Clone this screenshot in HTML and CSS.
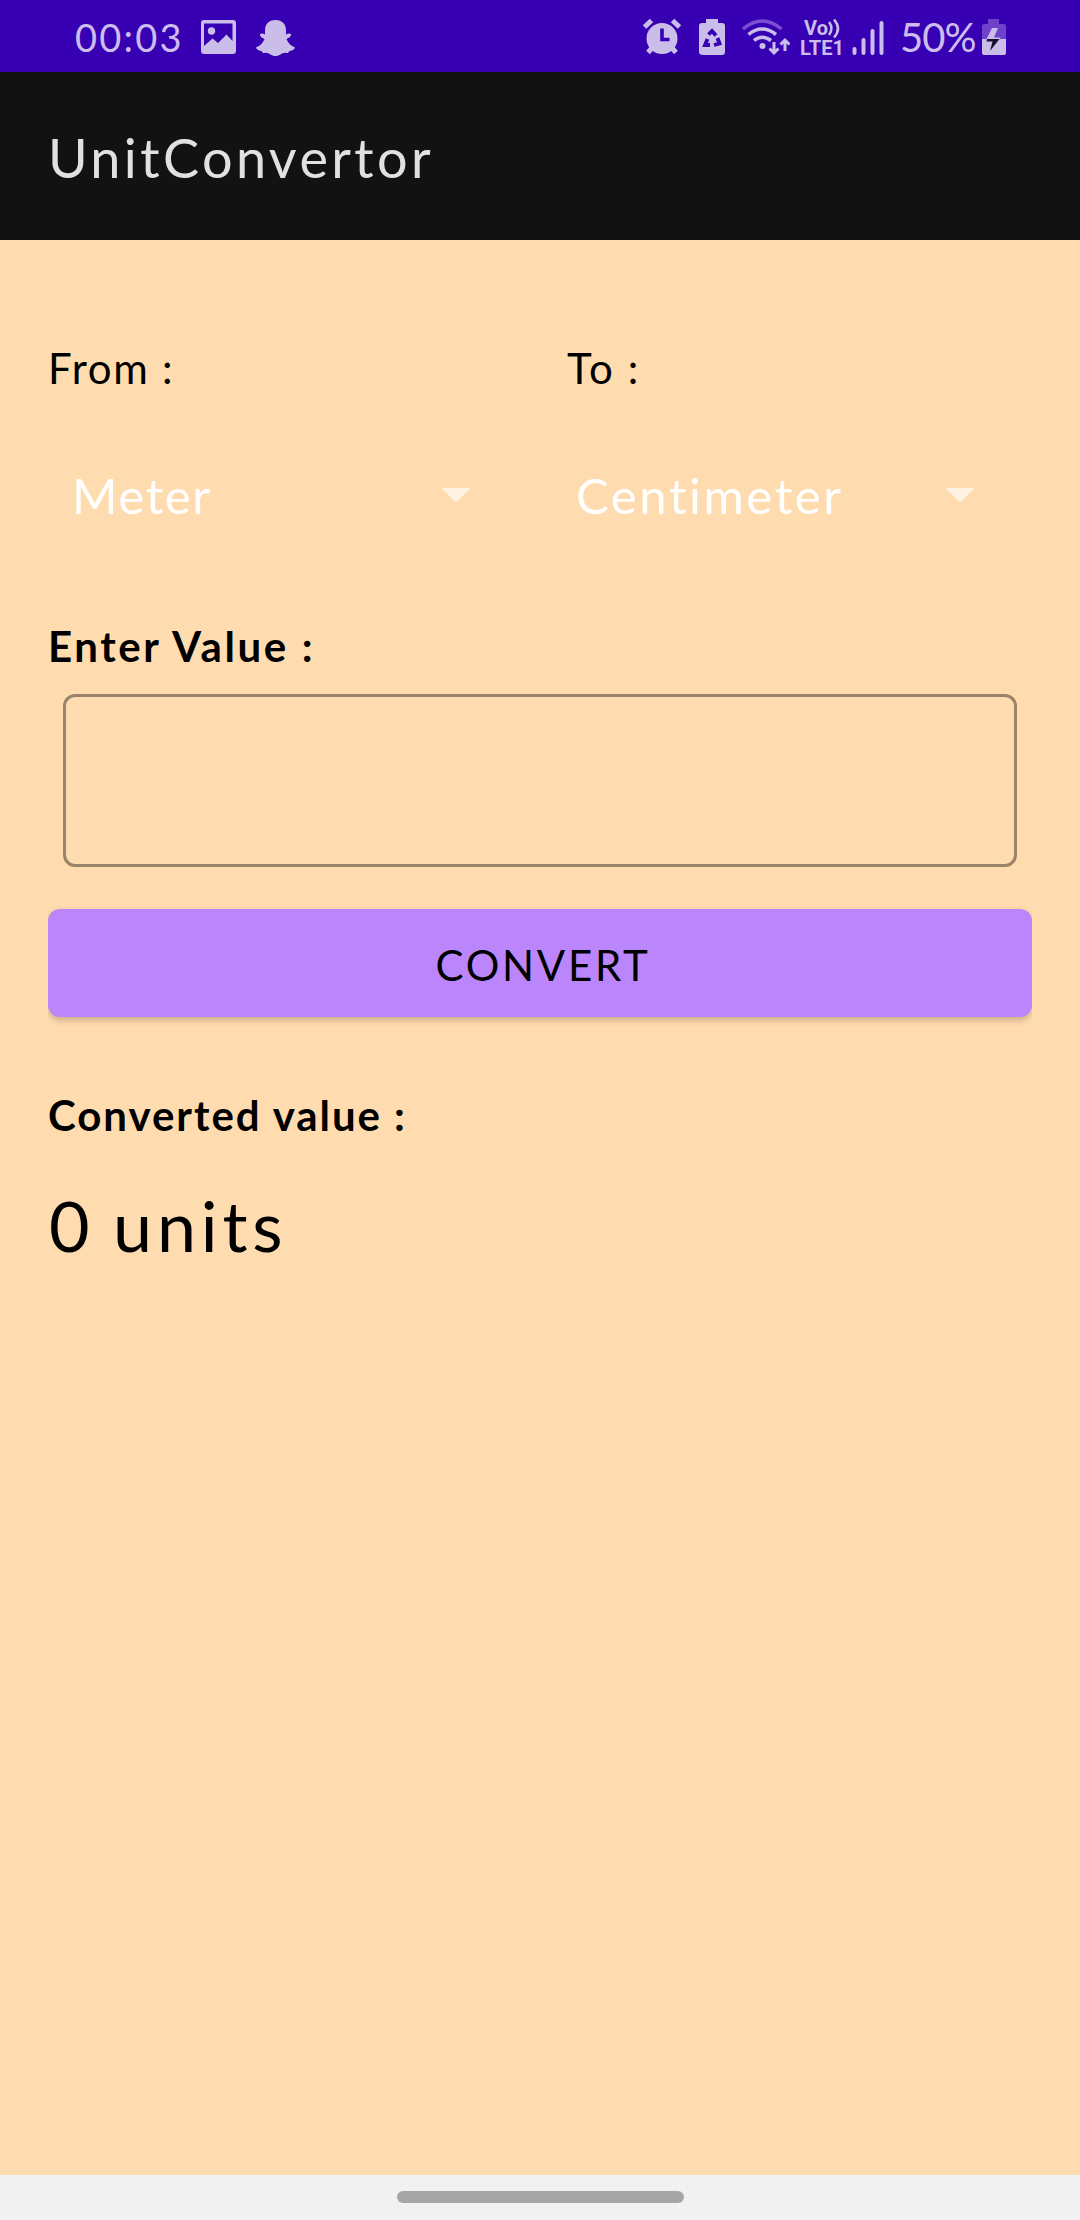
FILE: index.html
```html
<!DOCTYPE html>
<html lang="en">
<head>
<meta charset="utf-8">
<title>UnitConvertor</title>
<link rel="stylesheet" href="styles.css">
</head>
<body>
<div class="screen">
  <div class="status-bar">
    <div class="status-group">
      <span class="clock">00:03</span>
      <svg class="icon" width="36" height="42" viewBox="201 16 36 42"><path fill-rule="evenodd" d="M204 20h29q3 0 3 3v28q0 3-3 3h-29q-3 0-3-3V23q0-3 3-3zm0 3.500V46l8.500-7.500 5.500 4.500 8.500-8.500 6 6.500V23.500z"/><circle cx="211.500" cy="31" r="3.700"/></svg>
      <svg class="icon" width="40" height="42" viewBox="256 16 40 42"><path d="M275.500 20c7 0 10.500 4.500 10.500 10.500v4q2.500-1.500 5-.5c.5 2-2 4-4.500 5 1.500 4 4.500 7 8.500 8.500-.5 2.500-3.500 3-6 3.700-.5 1.800-1 2-3 1.600-4-.6-6 3.200-10.500 3.200s-6.500-3.800-10.500-3.200c-2 .4-2.500.2-3-1.600-2.500-.7-5.500-1.200-6-3.700 4-1.500 7-4.500 8.500-8.500-2.500-1-5-3-4.500-5q2.500-1 5 .5v-4C265 24.500 268.500 20 275.500 20z"/></svg>
    </div>
    <div class="status-group">
      <svg class="icon" width="38" height="42" viewBox="643 16 38 42"><path class="stroke" stroke-width="5" d="M644.500 27l7-6.500M679.500 27l-7-6.500M652 48l-4 4.500M672 48l4 4.500"/><circle cx="662" cy="38.500" r="15.500"/><path class="cut" stroke-width="3.600" d="M662 28.500v11h7.500"/></svg>
      <svg class="icon gap-recycle" width="26" height="42" viewBox="699 16 26 42"><path d="M706 19h12v4h4q3 0 3 3v26q0 3-3 3h-19q-4 0-4-3V26q0-3 3-3h4z"/><path class="cut" stroke-width="3.800" d="M708.500 34.500l3.500-3.500 4 4.500M717.500 38l2 5.500-5.500 1.500M710 45h-5l2.500-6"/></svg>
      <svg class="icon gap-wifi" width="48" height="42" viewBox="742 16 48 42"><path class="stroke faint" stroke-width="3.500" d="M743 29Q762 13 781.500 29"/><path class="stroke" stroke-width="3.500" d="M748.500 34.500Q762 23.500 776 34.500M754 40.500Q762 34 771 40.500"/><circle cx="762.500" cy="46" r="3"/><path class="stroke" stroke-width="3" d="M774 42v11M769.500 48.500l4.500 4.500 4.500-4.500M785 51V40M780.500 44.500l4.500-4.500 4.500 4.500"/></svg>
      <svg class="icon gap-volte" width="44" height="42" viewBox="800 16 44 42"><text class="volte" x="804" y="34.500" textLength="24">Vo</text><path class="stroke" stroke-width="2.500" d="M829 22q5 6 0 13M834 19.500q8 9 0 18"/><text class="volte" x="800" y="54.500" textLength="44" lengthAdjust="spacingAndGlyphs">LTE1</text></svg>
      <svg class="icon gap-signal" width="32" height="42" viewBox="852 16 32 42"><path class="stroke round" stroke-width="4" d="M854.500 49v4M863.500 40v13M872.500 31v22M881.500 23v30"/></svg>
      <span class="battery-level">50%</span>
      <svg class="icon" width="24" height="42" viewBox="982 16 24 42"><path class="faint-fill" d="M988 19h11v5h5q2 0 2 2v13h-24V26q0-2 2-2h4z"/><path d="M982 39h24v14q0 2-2 2h-20q-2 0-2-2z"/><path d="M992 28h6l-4 9.500h6.500l-1 1.500h-13z"/><path class="bolt" d="M987 39h12.500l-9.500 12 2.500-9.500h-6z"/></svg>
    </div>
  </div>

  <header class="app-bar"><h1 class="title">UnitConvertor</h1></header>

  <main class="content">
    <div class="labels">
      <span class="label from">From :</span>
      <span class="label to">To :</span>
    </div>
    <div class="spinners">
      <div class="spinner"><span class="meter">Meter</span><i class="arrow"></i></div>
      <div class="spinner"><span class="centimeter">Centimeter</span><i class="arrow"></i></div>
    </div>
    <label class="label strong enter" for="value">Enter Value :</label>
    <input class="field" id="value" type="text">
    <div class="button-wrap"><button class="convert" type="button">CONVERT</button></div>
    <div class="label strong converted">Converted value :</div>
    <div class="result">0 units</div>
  </main>

  <div class="nav-bar"><div class="nav-pill"></div></div>
</div>
</body>
</html>
```
FILE: styles.css
```css
* { box-sizing: border-box; }
body { margin: 0; }

.screen {
  display: flex;
  flex-direction: column;
  width: 1080px;
  height: 2220px;
  background: #ffdcaf;
  color: #000;
  font-family: Lato, "Open Sans", sans-serif;
}

.status-bar {
  display: flex;
  justify-content: space-between;
  height: 72px;
  padding: 2px 74px 0 75px;
  background: #3700b3;
  color: #cdbcee;
}
.status-group { display: flex; align-items: center; }
.clock { width: 126px; font-size: 38px; letter-spacing: 2.2px; }
.battery-level { width: 82px; margin-left: 16px; font-size: 40px; letter-spacing: -1px; }
.icon { display: block; flex: none; fill: #cabdea; }
.clock + .icon { margin-right: 19px; }
.gap-recycle { margin-left: 18px; }
.gap-wifi { margin-left: 17px; }
.gap-volte { margin-left: 10px; }
.gap-signal { margin-left: 8px; }
.stroke { fill: none; stroke: #cabdea; }
.round { stroke-linecap: round; }
.faint { stroke: #7a4fd0; }
.faint-fill { fill: #6f42ca; }
.cut { fill: none; stroke: #3700b3; }
.bolt { fill: #17122b; }
.volte { font: 700 20px Roboto, sans-serif; }

.app-bar {
  display: flex;
  align-items: center;
  height: 168px;
  padding: 2px 0 0 48px;
  background: #121212;
}
.title {
  margin: 0;
  color: #e1e1e1;
  font-size: 54px;
  font-weight: 400;
  letter-spacing: 3.4px;
}

.content {
  display: flex;
  flex: 1;
  flex-direction: column;
  padding: 103px 48px 0;
}
.labels { display: grid; grid-template-columns: 519px 1fr; }
.label { font-size: 42px; line-height: 50px; white-space: pre; }
.from { letter-spacing: 1.7px; }
.to { letter-spacing: 2.2px; }
.strong { font-weight: 700; }
.spinners { display: grid; grid-template-columns: 504px 480px; margin-top: 72px; }
.spinner {
  display: flex;
  align-items: center;
  height: 60px;
  padding-left: 24px;
  color: #fff;
  font-size: 49px;
}
.spinner span { width: 369px; white-space: nowrap; }
.meter { letter-spacing: 1.6px; }
.centimeter { letter-spacing: 2.6px; }
.arrow {
  width: 30px;
  height: 15px;
  background: #fff3e3;
  clip-path: polygon(0 0, 100% 0, 50% 100%);
}
.enter { margin-top: 96px; letter-spacing: 2.6px; }
.field {
  height: 173px;
  margin: 23px 15px 0;
  padding: 0 32px;
  border: 3px solid #998469;
  border-radius: 12px;
  background: transparent;
  font: inherit;
  font-size: 48px;
}
.button-wrap {
  margin-top: 34px;
  padding: 8px 0 16px;
  overflow: hidden;
}
.convert {
  display: block;
  width: 100%;
  height: 108px;
  padding: 3px 0 0 6px;
  border: 0;
  border-radius: 12px;
  background: #bb86fc;
  box-shadow: 0 3px 7px rgba(0, 0, 0, 0.22);
  color: #000;
  font: 400 42px Lato, sans-serif;
  letter-spacing: 2.7px;
}
.converted { margin-top: 57px; letter-spacing: 1.95px; }
.result { margin-top: 45px; padding-left: 1px; font-size: 70px; line-height: 80px; letter-spacing: 4.8px; word-spacing: -4px; }

.nav-bar {
  display: flex;
  justify-content: center;
  height: 45px;
  padding-top: 16px;
  background: #f1f1f1;
}
.nav-pill { width: 287px; height: 12px; border-radius: 6px; background: #a6a6a6; }
```
